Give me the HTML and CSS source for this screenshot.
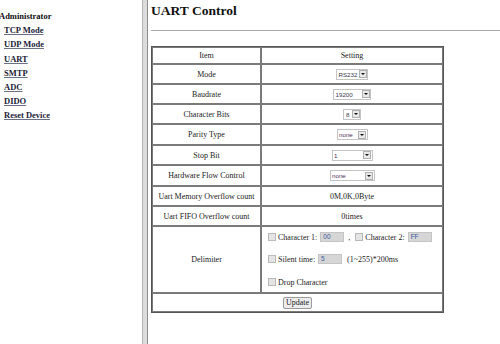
FILE: index.html
```html
<!DOCTYPE html>
<html>
<head>
<meta charset="utf-8">
<link rel="stylesheet" href="styles.css">
</head>
<body>
<div class="page">
  <nav class="nav">
    <div class="nav-title">Administrator</div>
    <a class="nav-link" href="#">TCP Mode</a>
    <a class="nav-link" href="#">UDP Mode</a>
    <a class="nav-link" href="#">UART</a>
    <a class="nav-link" href="#">SMTP</a>
    <a class="nav-link" href="#">ADC</a>
    <a class="nav-link" href="#">DIDO</a>
    <a class="nav-link" href="#">Reset Device</a>
  </nav>
  <div class="divider"></div>
  <main class="main">
    <h1 class="title">UART Control</h1>
    <hr class="rule">
    <table class="grid">
      <tr class="r17"><td class="c1">Item</td><td class="c2">Setting</td></tr>
      <tr class="r20"><td class="c1">Mode</td><td class="c2">
        <span class="sel w32"><span class="val">RS232</span><span class="btn"><svg width="4" height="2" viewBox="0 0 4 2"><path d="M0 0H4L2 2Z" fill="#111"/></svg></span></span>
      </td></tr>
      <tr class="r20"><td class="c1">Baudrate</td><td class="c2">
        <span class="sel w38"><span class="val">19200</span><span class="btn"><svg width="4" height="2" viewBox="0 0 4 2"><path d="M0 0H4L2 2Z" fill="#111"/></svg></span></span>
      </td></tr>
      <tr class="r20"><td class="c1">Character Bits</td><td class="c2">
        <span class="sel w18"><span class="val">8</span><span class="btn"><svg width="4" height="2" viewBox="0 0 4 2"><path d="M0 0H4L2 2Z" fill="#111"/></svg></span></span>
      </td></tr>
      <tr class="r21"><td class="c1">Parity Type</td><td class="c2">
        <span class="sel w31"><span class="val purple">none</span><span class="btn"><svg width="4" height="2" viewBox="0 0 4 2"><path d="M0 0H4L2 2Z" fill="#111"/></svg></span></span>
      </td></tr>
      <tr class="r20"><td class="c1">Stop Bit</td><td class="c2">
        <span class="sel w41"><span class="val purple">1</span><span class="btn"><svg width="4" height="2" viewBox="0 0 4 2"><path d="M0 0H4L2 2Z" fill="#111"/></svg></span></span>
      </td></tr>
      <tr class="r21"><td class="c1">Hardware Flow Control</td><td class="c2">
        <span class="sel w45"><span class="val purple">none</span><span class="btn"><svg width="4" height="2" viewBox="0 0 4 2"><path d="M0 0H4L2 2Z" fill="#111"/></svg></span></span>
      </td></tr>
      <tr class="r20"><td class="c1">Uart Memory Overflow count</td><td class="c2">0M,0K,0Byte</td></tr>
      <tr class="r20"><td class="c1">Uart FIFO Overflow count</td><td class="c2">0times</td></tr>
      <tr class="r65"><td class="c1">Delimiter</td><td class="c2 delim">
        <div class="dline l1">
          <span class="cb"></span><span class="lbl">Character 1:</span><span class="txt">00</span><span class="comma">,</span>
          <span class="cb"></span><span class="lbl">Character 2:</span><span class="txt">FF</span>
        </div>
        <div class="dline l2">
          <span class="cb"></span><span class="lbl">Silent time:</span><span class="txt">5</span><span class="hint">(1~255)*200ms</span>
        </div>
        <div class="dline l3">
          <span class="cb"></span><span class="lbl">Drop Character</span>
        </div>
      </td></tr>
      <tr class="r19"><td class="foot" colspan="2"><span class="button">Update</span></td></tr>
    </table>
  </main>
</div>
</body>
</html>
```
FILE: styles.css
```css
html, body {
  margin: 0;
  padding: 0;
  background: #fff;
}
body {
  font-family: "Liberation Serif", "Times New Roman", serif;
  color: #222;
}
.page {
  display: flex;
  width: 500px;
  height: 344px;
  overflow: hidden;
}
.nav {
  width: 142px;
  flex: none;
  padding-top: 9px;
  box-sizing: border-box;
  display: flex;
  flex-direction: column;
  font-size: 8.5px;
  font-weight: bold;
  line-height: 14.2px;
}
.nav-title {
  color: #111;
  margin-left: -1px;
}
.nav-link {
  color: #1c1c38;
  text-decoration: underline;
  text-decoration-color: #6a6f8a;
  margin-left: 4px;
  align-self: flex-start;
}
.divider {
  width: 4px;
  flex: none;
  background: #dcdcdc;
  border-left: 1px solid #b4b4b4;
  border-right: 1px solid #8c8c8c;
}
.main {
  flex: 1;
  padding-left: 3px;
  min-width: 0;
}
.title {
  margin: 3px 0 0 0;
  font-size: 13.5px;
  line-height: 15px;
  font-weight: bold;
  color: #111;
}
.rule {
  margin: 12px -20px 0 0;
  height: 0;
  border: 0;
  border-top: 1px solid #a8a8a8;
}
.grid {
  margin-top: 15px;
  width: 293px;
  border-collapse: separate;
  border-spacing: 0;
  border: 1px solid #555;
  font-size: 8px;
  color: #222;
}
.grid td {
  border: 1px solid #7a7a7a;
  padding: 0;
  text-align: center;
  vertical-align: middle;
}
.c1 { width: 107px; }
.r17 td { height: 15px; }
.r19 td { height: 17px; }
.r20 td { height: 18px; }
.r21 td { height: 19px; }
.r65 td { height: 63px; }

.sel {
  display: inline-flex;
  align-items: center;
  box-sizing: border-box;
  height: 11px;
  border: 1px solid #c4c4c4;
  background: #fff;
  vertical-align: middle;
}
.w18 { width: 18px; }
.w32 { width: 32px; }
.w31 { width: 31px; }
.w38 { width: 38px; }
.w41 { width: 41px; }
.w45 { width: 45px; }
.val {
  flex: 1;
  min-width: 0;
  font-family: "Liberation Sans", Arial, sans-serif;
  font-size: 6.2px;
  line-height: 9px;
  color: #3a3a4a;
  text-align: left;
  padding-left: 1.5px;
  white-space: nowrap;
  overflow: hidden;
}
.w18 .val { text-align: center; padding-left: 0; }
.val.purple { color: #4a2c62; }
.btn {
  width: 8px;
  height: 8px;
  margin-right: 0.5px;
  box-sizing: border-box;
  border: 1px solid #b0b0b0;
  background: #e8e8e8;
  display: flex;
  align-items: center;
  justify-content: center;
  flex: none;
}
.btn svg { display: block; }

.delim {
  text-align: left !important;
  padding: 4px 0 4px 6px !important;
  box-sizing: border-box;
}
.dline {
  display: flex;
  align-items: center;
  height: 12px;
  white-space: nowrap;
}
.l2 { margin-top: 10px; }
.l3 { margin-top: 11px; }
.cb {
  width: 8px;
  height: 8px;
  box-sizing: border-box;
  border: 1px solid #b8b8b8;
  background: #e4e4e4;
  margin-right: 2px;
  flex: none;
}
.lbl { margin-right: 3px; }
.txt {
  width: 24px;
  height: 10px;
  box-sizing: border-box;
  border: 1px solid #c4c4c4;
  background: #d6d6d6;
  font-family: "Liberation Sans", Arial, sans-serif;
  font-size: 6.5px;
  line-height: 8px;
  color: #3c5aa0;
  padding-left: 2px;
  flex: none;
}
.comma { margin: 0 5px 0 4px; }
.hint { margin-left: 5px; }

.foot { text-align: center; }
.button {
  display: inline-block;
  box-sizing: border-box;
  width: 29px;
  height: 12px;
  line-height: 10px;
  border: 1px solid #9a9a9a;
  border-radius: 2px;
  background: #ececec;
  font-size: 8px;
  color: #222;
  vertical-align: middle;
}
```
